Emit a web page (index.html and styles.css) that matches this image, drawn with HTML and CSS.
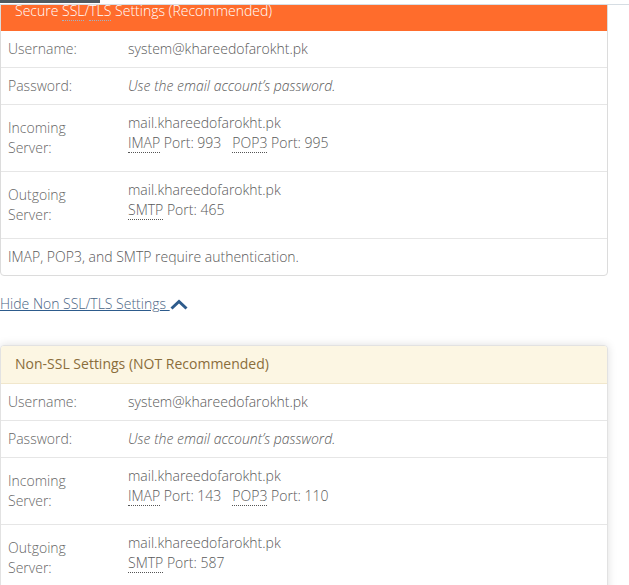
FILE: index.html
```html
<!DOCTYPE html>
<html>
<head>
<meta charset="utf-8">
<link rel="stylesheet" href="styles.css">
</head>
<body>
<div class="topbar"><div class="topbar-dark"></div></div>
<main class="content">
  <section class="panel panel-secure">
    <div class="panel-heading heading-secure">Secure <abbr title="Secure Sockets Layer">SSL</abbr>/<abbr title="Transport Layer Security">TLS</abbr> Settings (Recommended)</div>
    <div class="row">
      <div class="label">Username:</div>
      <div class="value">system@khareedofarokht.pk</div>
    </div>
    <div class="row">
      <div class="label">Password:</div>
      <div class="value"><em>Use the email account’s password.</em></div>
    </div>
    <div class="row row-tall">
      <div class="label">Incoming Server:</div>
      <div class="value">mail.khareedofarokht.pk<br><span class="port"><abbr>IMAP</abbr> Port: 993</span><span class="port"><abbr>POP3</abbr> Port: 995</span></div>
    </div>
    <div class="row row-tall">
      <div class="label">Outgoing Server:</div>
      <div class="value">mail.khareedofarokht.pk<br><span class="port"><abbr>SMTP</abbr> Port: 465</span></div>
    </div>
    <div class="row">
      <div class="note">IMAP, POP3, and SMTP require authentication.</div>
    </div>
  </section>

  <a class="toggle" href="#">Hide Non SSL/TLS Settings <svg class="chev" width="18" height="11" viewBox="0 0 18 11"><polyline points="1.5,9.5 9,2.5 16.5,9.5" fill="none" stroke="#2d5b8c" stroke-width="3"/></svg></a>

  <section class="panel panel-plain">
    <div class="panel-heading heading-warn">Non-SSL Settings (NOT Recommended)</div>
    <div class="row">
      <div class="label">Username:</div>
      <div class="value">system@khareedofarokht.pk</div>
    </div>
    <div class="row">
      <div class="label">Password:</div>
      <div class="value"><em>Use the email account’s password.</em></div>
    </div>
    <div class="row row-tall">
      <div class="label">Incoming Server:</div>
      <div class="value">mail.khareedofarokht.pk<br><span class="port"><abbr>IMAP</abbr> Port: 143</span><span class="port"><abbr>POP3</abbr> Port: 110</span></div>
    </div>
    <div class="row row-tall">
      <div class="label">Outgoing Server:</div>
      <div class="value">mail.khareedofarokht.pk<br><span class="port"><abbr>SMTP</abbr> Port: 587</span></div>
    </div>
    <div class="row">
      <div class="note">IMAP, POP3, and SMTP require authentication.</div>
    </div>
  </section>
</main>
</body>
</html>
```

FILE: styles.css
```css
html, body {
  margin: 0;
  padding: 0;
  background: #fff;
}
body {
  font-family: "Open Sans", "Liberation Sans", sans-serif;
  font-size: 14px;
  font-weight: 300;
  line-height: 20px;
  color: #666;
  overflow: hidden;
}
.topbar {
  position: fixed;
  top: 0;
  left: 0;
  right: 0;
  height: 4px;
  background: #fff;
  border-bottom: 1px solid #d6dde3;
  z-index: 10;
}
.topbar-dark {
  width: 100px;
  height: 3px;
  background: #4f5960;
}
.content {
  margin-top: -8px;
  width: 608px;
}
.panel {
  border: 1px solid #dcdcdc;
  border-radius: 4px;
  background: #fff;
  overflow: hidden;
}
.panel-plain {
  border-color: #e2e2e2;
  box-shadow: 0 0 10px rgba(0, 0, 0, 0.13);
}
.panel-heading {
  padding: 8px 14px 9px;
  border-bottom: 1px solid transparent;
}
.heading-secure {
  background: #ff6c2c;
  border-bottom-color: #ff6c2c;
  color: #fff;
  font-weight: 300;
}
.heading-secure abbr {
  text-decoration: none;
  border-bottom: 1px dotted #9fb3c8;
}
.heading-warn {
  background: #fcf6e3;
  border-bottom-color: #f1e7cc;
  color: #8a6d3b;
  font-weight: 400;
}
.row {
  display: flex;
  border-top: 1px solid #e6e6e6;
}
.panel-heading + .row {
  border-top: none;
}
.label {
  width: 112px;
  flex: none;
  padding: 8px 0 8px 7px;
  align-self: center;
  color: #666;
}
.row-tall .label {
  width: 80px;
  padding-right: 32px;
}
.value {
  padding: 8px 8px 8px 8px;
  color: #5a5a5a;
}
.row-tall .value {
  padding-bottom: 18px;
}
.value em {
  font-style: italic;
}
.port + .port {
  margin-left: 11px;
}
abbr {
  text-decoration: none;
  border-bottom: 1px dotted #555;
}
.note {
  padding: 8px 7px;
  color: #5a5a5a;
}
.toggle {
  display: inline-flex;
  align-items: center;
  margin-top: 18px;
  margin-bottom: 31px;
  color: #4a6585;
  text-decoration: underline;
  text-decoration-color: #2d5b8c;
  white-space: pre;
}
.chev {
  margin-left: 0;
  text-decoration: none;
}
```
